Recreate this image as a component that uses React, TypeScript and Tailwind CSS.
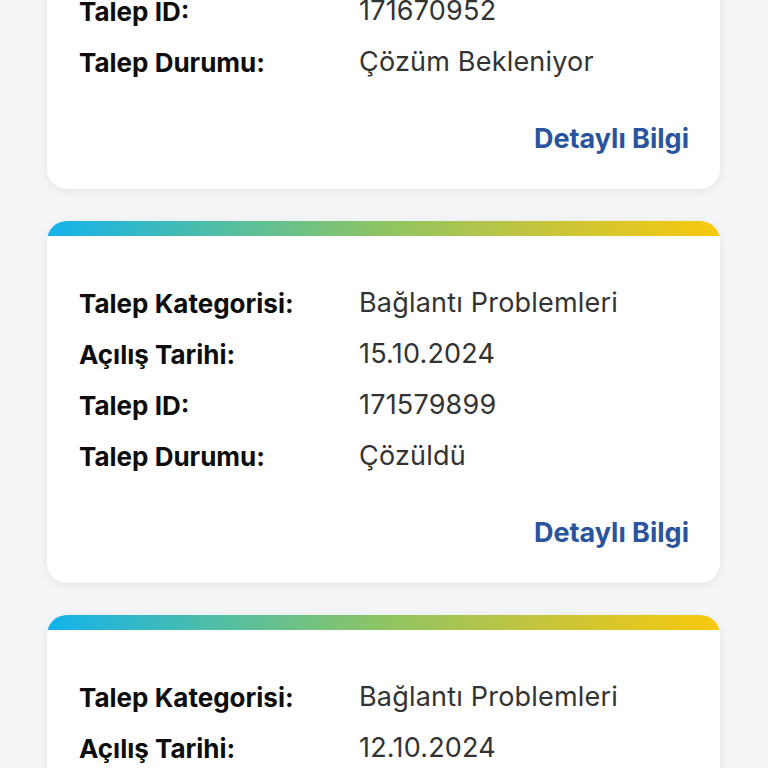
import React from "react";

type Row = [string, string];

const cards: Row[][] = [
  [
    ["Talep Kategorisi:", "Bağlantı Problemleri"],
    ["Açılış Tarihi:", "16.10.2024"],
    ["Talep ID:", "171670952"],
    ["Talep Durumu:", "Çözüm Bekleniyor"],
  ],
  [
    ["Talep Kategorisi:", "Bağlantı Problemleri"],
    ["Açılış Tarihi:", "15.10.2024"],
    ["Talep ID:", "171579899"],
    ["Talep Durumu:", "Çözüldü"],
  ],
  [
    ["Talep Kategorisi:", "Bağlantı Problemleri"],
    ["Açılış Tarihi:", "12.10.2024"],
    ["Talep ID:", "171512345"],
    ["Talep Durumu:", "Çözüldü"],
  ],
];

function Card({ rows }: { rows: Row[] }) {
  return (
    <div className="rounded-[20px] overflow-hidden bg-white shadow-[0_2px_10px_rgba(0,0,0,0.07)]">
      <div className="h-[15px] bg-[linear-gradient(to_right,#13b2ec,#4fbea6,#8ec464,#c9c53a,#f7c90c)]" />
      <div className="pt-[42px] pb-[24px] pl-[32px] pr-[31px]">
        {rows.map(([k, v]) => (
          <div key={k} className="flex h-[51px] items-center">
            <div className="w-[280px] shrink-0 text-[26px] font-bold text-[#0d0d0d] tracking-[0px]">
              {k}
            </div>
            <div className="text-[27px] font-normal text-[#333333] tracking-[0.2px]">{v}</div>
          </div>
        ))}
        <div className="mt-[26px] flex h-[51px] items-center justify-end">
          <span className="text-[27px] font-bold text-[#2a53a0] tracking-[0px]">Detaylı Bilgi</span>
        </div>
      </div>
    </div>
  );
}

export default function App() {
  return (
    <div
      className="min-h-screen w-full bg-[#f4f5f7] overflow-hidden"
      style={{ fontFamily: "Inter, 'Noto Sans', sans-serif" }}
    >
      <div className="-mt-[173px] flex flex-col gap-[32px] pl-[47px] pr-[48px] pb-[40px]">
        {cards.map((rows, i) => (
          <Card key={i} rows={rows} />
        ))}
      </div>
    </div>
  );
}
